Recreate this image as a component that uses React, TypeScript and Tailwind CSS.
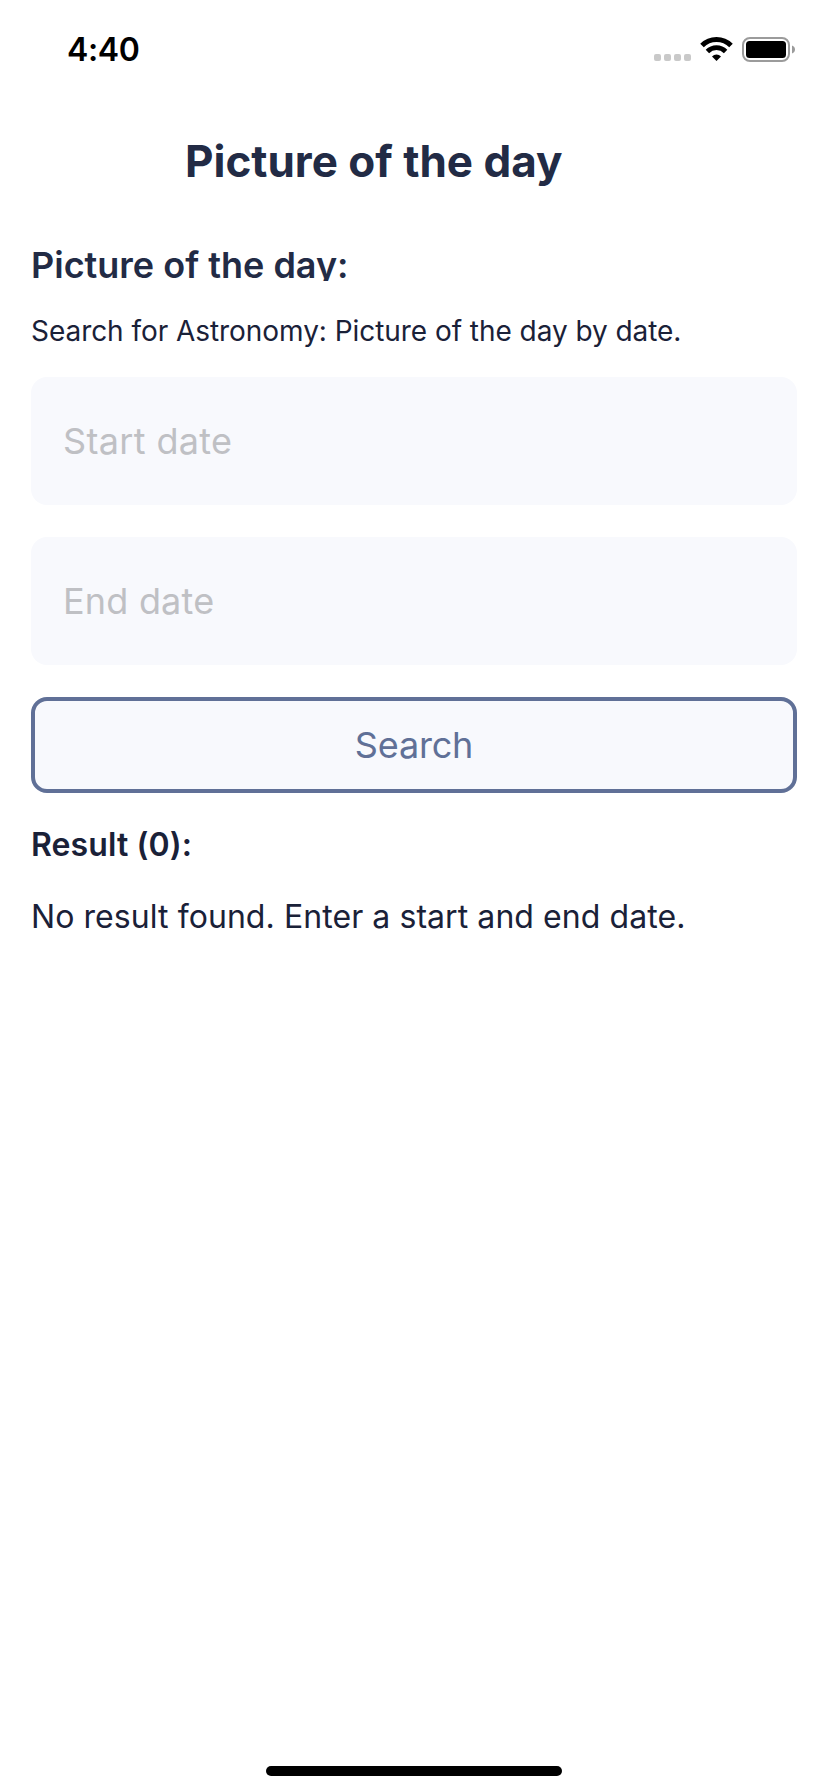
import React from "react";

function StatusBar() {
  return (
    <header className="flex h-[100px] items-start justify-between pl-[67px] pr-[33px] pt-[30px] text-black">
      <span className="text-[32px] font-semibold leading-[40px] tracking-[-0.4px]">4:40</span>
      <div className="flex h-[40px] items-start pt-[7px]">
        <div className="mt-[17px] flex gap-[3px]">
          {[0, 1, 2, 3].map((i) => (
            <span key={i} className="size-[7px] rounded-[2px] bg-[#c9c9c9]" />
          ))}
        </div>
        <svg className="ml-[9px] h-[25px] w-[33px]" viewBox="0 0 33 25" fill="none">
          <path d="M2 8.6 A20.5 20.5 0 0 1 31 8.6" stroke="#000" strokeWidth="5" />
          <path d="M7.4 14.5 A12.8 12.8 0 0 1 25.6 14.5" stroke="#000" strokeWidth="4.8" />
          <path d="M16.5 24 L12 19.4 A6.5 6.5 0 0 1 21 19.4 Z" fill="#000" />
        </svg>
        <svg className="ml-[9px] h-[25px] w-[53px]" viewBox="0 0 53 25" fill="none">
          <rect x="1" y="1" width="46" height="23" rx="7" stroke="#9b9b9b" strokeWidth="2" />
          <rect x="4" y="4" width="40" height="17" rx="3.5" fill="#000" />
          <path d="M50 8.5 C52 9.2 53 10.7 53 12.5 C53 14.3 52 15.8 50 16.5 Z" fill="#9b9b9b" />
        </svg>
      </div>
    </header>
  );
}

function DateField({ label, spacing }: { label: string; spacing: string }) {
  return (
    <input
      type="text"
      aria-label={label}
      placeholder={label}
      className={`block h-[128px] w-full rounded-[16px] bg-[#f8f9fd] px-[32px] text-[36px] text-[#1a2138] outline-none placeholder:text-[#bfc0c4] placeholder:opacity-100 ${spacing}`}
    />
  );
}

export default function App() {
  return (
    <div className="flex h-[1792px] w-[828px] flex-col bg-white font-['Inter',sans-serif]">
      <StatusBar />
      <h1 className="mt-[35px] pl-[185px] text-[44px] font-bold leading-[52px] text-[#222b45]">
        Picture of the day
      </h1>
      <main className="flex flex-1 flex-col pl-[31px] pr-[31px] pt-[60px] text-[#1a2138]">
        <h2 className="h-[34px] overflow-hidden text-[36px] font-semibold leading-[36px] text-[#222b45]">
          Picture of the day:
        </h2>
        <p className="mt-[30px] text-[28px] leading-[40px] tracking-[-0.05px]">
          Search for Astronomy: Picture of the day by date.
        </p>
        <form className="mt-[26px] flex flex-col gap-[32px]">
          <DateField label="Start date" spacing="tracking-[0.35px]" />
          <DateField label="End date" spacing="tracking-[0.2px]" />
          <button
            type="button"
            className="h-[96px] rounded-[16px] border-4 border-[#607097] bg-[#f8f9fd] text-[36px] tracking-[-0.2px] text-[#607097]"
          >
            Search
          </button>
        </form>
        <h3 className="mt-[32px] text-[32px] font-semibold leading-[40px] tracking-[0.1px]">Result (0):</h3>
        <p className="mt-[32px] text-[32px] leading-[40px] tracking-[0.07px]">
          No result found. Enter a start and end date.
        </p>
      </main>
      <footer className="flex h-[26px] justify-center">
        <div className="h-[10px] w-[296px] rounded-full bg-black" />
      </footer>
    </div>
  );
}
